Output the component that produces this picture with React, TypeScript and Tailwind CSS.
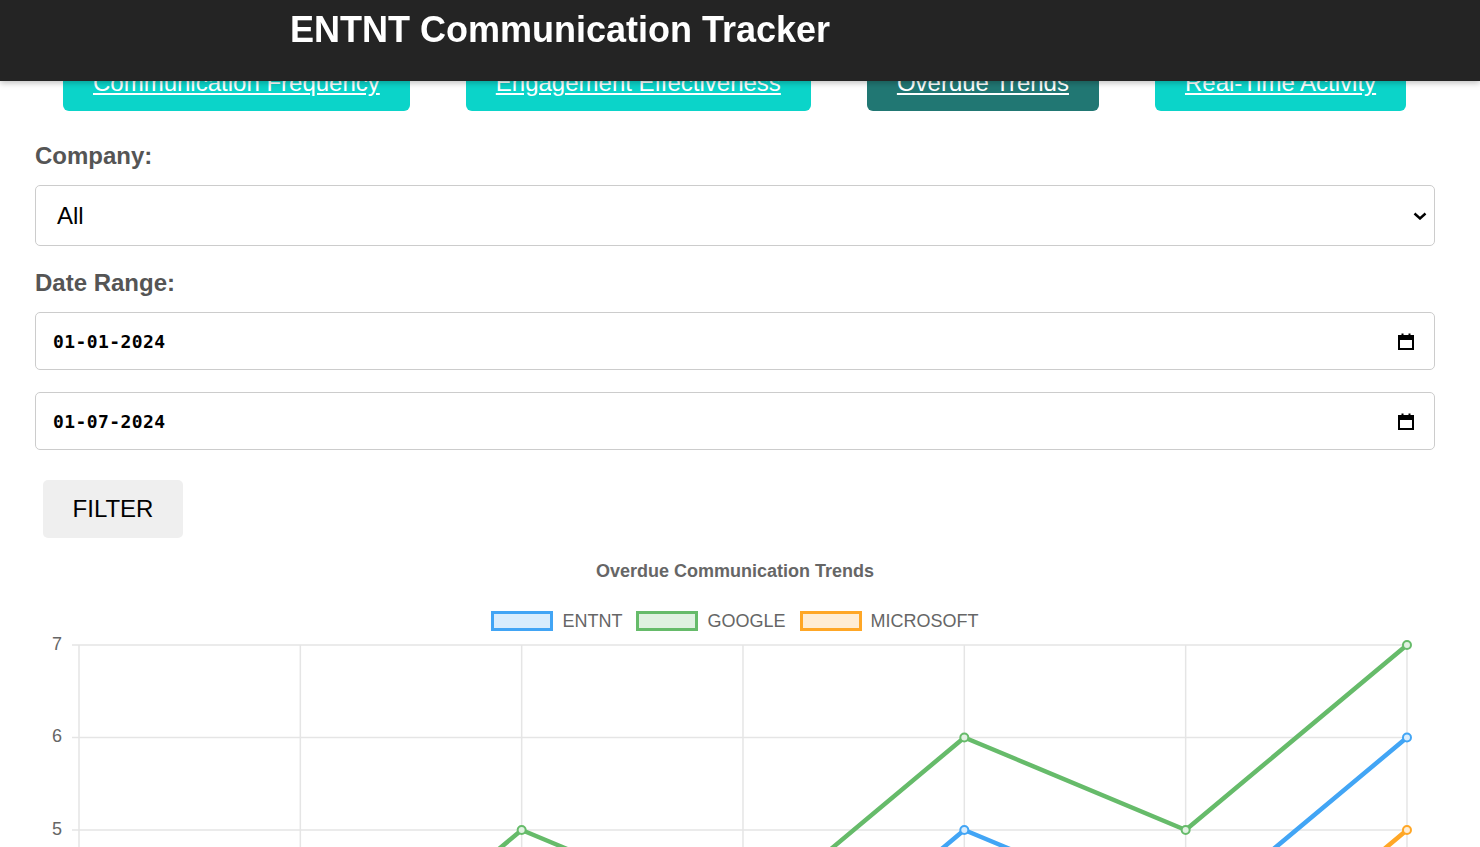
import { useState } from "react";

const tabs = [
  { label: "Communication Frequency", active: false },
  { label: "Engagement Effectiveness", active: false },
  { label: "Overdue Trends", active: true },
  { label: "Real-Time Activity", active: false },
];

const series = [
  { name: "ENTNT", stroke: "#42a5f5", fill: "#d9edfd", data: [3, 2, 4, 3, 5, 4, 6] },
  { name: "GOOGLE", stroke: "#66bb6a", fill: "#e0f1e1", data: [2, 3, 5, 4, 6, 5, 7] },
  { name: "MICROSOFT", stroke: "#ffa726", fill: "#ffedd4", data: [1, 2, 3, 2, 4, 3, 5] },
];

// plot geometry (svg local coords)
const xAt = (i: number) => 44 + i * 221.33;
const yAt = (v: number) => 9 + (7 - v) * 92.5;

const OverdueChart = () => (
  <div className="w-full">
    <div className="mt-[23px] text-center text-[18px] leading-[21px] font-bold text-[#666]">
      Overdue Communication Trends
    </div>

    {/* Legend */}
    <div className="mt-[29px] flex h-[20px] items-center justify-center gap-[14px] text-[18px] text-[#666]">
      {series.map((s) => (
        <div key={s.name} className="flex items-center gap-[9px]">
          <span
            className="block h-[20px] w-[62px] border-[3px]"
            style={{ borderColor: s.stroke, backgroundColor: s.fill }}
          />
          <span className="leading-[20px]">{s.name}</span>
        </div>
      ))}
    </div>

    <svg className="mt-[5px] block" width="1400" height="680" viewBox="0 0 1400 680">
      {/* grid */}
      {[7, 6, 5, 4, 3, 2, 1, 0].map((v) => (
        <g key={v}>
          <line x1={37} x2={1372} y1={yAt(v)} y2={yAt(v)} stroke="#e5e5e5" strokeWidth="1.5" />
          <text
            x={27}
            y={yAt(v)}
            textAnchor="end"
            dominantBaseline="middle"
            fontSize="18"
            fill="#666"
            fontFamily="'Liberation Sans', Arial, sans-serif"
          >
            {v}
          </text>
        </g>
      ))}
      {[0, 1, 2, 3, 4, 5, 6].map((i) => (
        <line key={i} x1={xAt(i)} x2={xAt(i)} y1={yAt(7)} y2={yAt(0) + 7} stroke="#e5e5e5" strokeWidth="1.5" />
      ))}

      {/* series */}
      {series.map((s) => (
        <g key={s.name}>
          <polyline
            points={s.data.map((v, i) => `${xAt(i)},${yAt(v)}`).join(" ")}
            fill="none"
            stroke={s.stroke}
            strokeWidth="4.5"
            strokeLinejoin="round"
          />
          {s.data.map((v, i) => (
            <circle key={i} cx={xAt(i)} cy={yAt(v)} r="4" fill={s.fill} stroke={s.stroke} strokeWidth="2" />
          ))}
        </g>
      ))}
    </svg>
  </div>
);

const CalendarIcon = () => (
  <svg width="16" height="17" viewBox="0 0 16 17" className="block">
    <rect x="1" y="3" width="14" height="13" fill="none" stroke="#000" strokeWidth="2" />
    <rect x="1" y="3" width="14" height="4" fill="#000" />
    <rect x="3.5" y="0.5" width="2" height="3" fill="#000" />
    <rect x="10.5" y="0.5" width="2" height="3" fill="#000" />
  </svg>
);

const DateField = ({ value }: { value: string }) => (
  <div className="flex h-[58px] items-center justify-between rounded-[5px] border border-[#ccc] bg-white pl-[17px] pr-[20px]">
    <span className="font-['DejaVu_Sans_Mono',monospace] text-[18px] font-bold tracking-[0.4px] text-black">{value}</span>
    <CalendarIcon />
  </div>
);

export default function App() {
  const [company] = useState("All");

  return (
    <div className="min-h-screen bg-white font-['Liberation_Sans',Arial,sans-serif]">
      {/* Header */}
      <header className="fixed top-0 left-0 z-50 h-[81px] w-full bg-[#242424] pl-[290px] pt-[12px] shadow-[0_2px_6px_rgba(0,0,0,0.25)]">
        <h1 className="text-[36px] leading-none font-bold text-white">ENTNT Communication Tracker</h1>
      </header>

      <main className="pl-[35px] pr-[45px] pt-[55px]">
        {/* Tabs */}
        <nav className="flex">
          {tabs.map((t) => (
            <a
              key={t.label}
              href="#"
              className={
                t.active
                  ? "mx-[28px] rounded-[6px] bg-[#217773] px-[30px] py-[14px] text-[24px] leading-[28px] text-white underline"
                  : "mx-[28px] rounded-[6px] bg-[#0bd4c9] px-[30px] py-[14px] text-[24px] leading-[28px] text-white underline"
              }
            >
              {t.label}
            </a>
          ))}
        </nav>

        {/* Filters */}
        <label className="mt-[31px] mb-[15px] block text-[24px] leading-[28px] font-bold text-[#555]">Company:</label>
        <div className="flex h-[61px] items-center justify-between rounded-[5px] border border-[#ccc] bg-white pl-[21px] pr-[7px]">
          <span className="text-[24px] text-black">{company}</span>
          <svg width="14" height="8" viewBox="0 0 14 8">
            <polyline points="1.5,1.5 7,6.5 12.5,1.5" fill="none" stroke="#000" strokeWidth="2.4" />
          </svg>
        </div>

        <label className="mt-[23px] mb-[15px] block text-[24px] leading-[28px] font-bold text-[#555]">Date Range:</label>
        <DateField value="01-01-2024" />
        <div className="mt-[22px]">
          <DateField value="01-07-2024" />
        </div>

        <button className="mt-[30px] ml-[8px] h-[58px] w-[140px] rounded-[5px] bg-[#efefef] text-[24px] text-black">
          FILTER
        </button>

        <OverdueChart />
      </main>
    </div>
  );
}
